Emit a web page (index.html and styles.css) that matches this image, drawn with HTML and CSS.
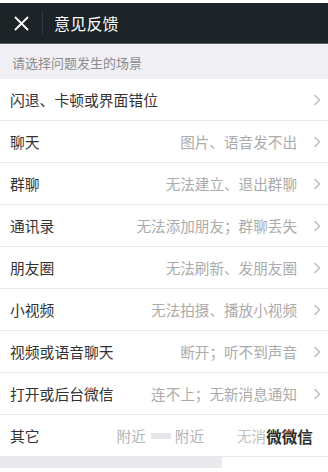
FILE: index.html
```html
<!DOCTYPE html>
<html lang="zh-CN">
<head>
<meta charset="utf-8">
<link rel="stylesheet" href="styles.css">
</head>
<body>
<div class="page">
  <header class="topbar">
    <span class="close">
      <svg width="15" height="15" viewBox="0 0 15 15"><path d="M1.5 1.5 L13.5 13.5 M13.5 1.5 L1.5 13.5" stroke="#ffffff" stroke-width="1.8" stroke-linecap="round"/></svg>
    </span>
    <span class="divider"></span>
    <span class="title">意见反馈</span>
  </header>
  <div class="section">请选择问题发生的场景</div>
  <ul class="list">
    <li class="row"><span class="label">闪退、卡顿或界面错位</span><span class="desc"></span><svg class="chev" width="8" height="12" viewBox="0 0 8 12"><path d="M1.5 1 L6.5 6 L1.5 11" fill="none" stroke="#bdbdbd" stroke-width="1.4"/></svg></li>
    <li class="row"><span class="label">聊天</span><span class="desc">图片、语音发不出</span><svg class="chev" width="8" height="12" viewBox="0 0 8 12"><path d="M1.5 1 L6.5 6 L1.5 11" fill="none" stroke="#bdbdbd" stroke-width="1.4"/></svg></li>
    <li class="row"><span class="label">群聊</span><span class="desc">无法建立、退出群聊</span><svg class="chev" width="8" height="12" viewBox="0 0 8 12"><path d="M1.5 1 L6.5 6 L1.5 11" fill="none" stroke="#bdbdbd" stroke-width="1.4"/></svg></li>
    <li class="row"><span class="label">通讯录</span><span class="desc">无法添加朋友；群聊丢失</span><svg class="chev" width="8" height="12" viewBox="0 0 8 12"><path d="M1.5 1 L6.5 6 L1.5 11" fill="none" stroke="#bdbdbd" stroke-width="1.4"/></svg></li>
    <li class="row"><span class="label">朋友圈</span><span class="desc">无法刷新、发朋友圈</span><svg class="chev" width="8" height="12" viewBox="0 0 8 12"><path d="M1.5 1 L6.5 6 L1.5 11" fill="none" stroke="#bdbdbd" stroke-width="1.4"/></svg></li>
    <li class="row"><span class="label">小视频</span><span class="desc">无法拍摄、播放小视频</span><svg class="chev" width="8" height="12" viewBox="0 0 8 12"><path d="M1.5 1 L6.5 6 L1.5 11" fill="none" stroke="#bdbdbd" stroke-width="1.4"/></svg></li>
    <li class="row"><span class="label">视频或语音聊天</span><span class="desc">断开；听不到声音</span><svg class="chev" width="8" height="12" viewBox="0 0 8 12"><path d="M1.5 1 L6.5 6 L1.5 11" fill="none" stroke="#bdbdbd" stroke-width="1.4"/></svg></li>
    <li class="row"><span class="label">打开或后台微信</span><span class="desc">连不上；无新消息通知</span><svg class="chev" width="8" height="12" viewBox="0 0 8 12"><path d="M1.5 1 L6.5 6 L1.5 11" fill="none" stroke="#bdbdbd" stroke-width="1.4"/></svg></li>
    <li class="row last"><span class="label">其它</span>
      <span class="glitch">
        <span class="g1">附近</span><span class="gblock"></span><span class="g2">附近</span><span class="g3">无消</span><span class="mark">微微信</span>
      </span>
    </li>
  </ul>
  <div class="footer"><span class="fbar"></span></div>
</div>
</body>
</html>
```
FILE: styles.css
```css
* { box-sizing: border-box; }
html, body { margin: 0; padding: 0; background: #ffffff; }
body {
  font-family: "Noto Sans CJK SC", "Noto Sans", sans-serif;
  width: 328px;
  height: 472px;
  overflow: hidden;
}
.page { padding-top: 3px; }
.topbar {
  height: 41px;
  background: #1d2427;
  border-bottom: 1px solid #5a5f62;
  display: flex;
  align-items: center;
}
.close {
  width: 42px;
  display: flex;
  justify-content: center;
  align-items: center;
  padding-left: 1px;
}
.close svg { display: block; }
.divider {
  width: 1px;
  height: 22px;
  background: #353b3e;
}
.title {
  color: #ffffff;
  font-size: 16px;
  margin-left: 11px;
  letter-spacing: 0.2px;
}
.section {
  height: 35px;
  background: #efeff4;
  color: #8c8c8c;
  font-size: 13px;
  padding-left: 12px;
  display: flex;
  align-items: center;
  padding-top: 2px;
}
.list { list-style: none; margin: 0; padding: 0; }
.row {
  height: 42px;
  border-bottom: 1px solid #e8e8e8;
  display: flex;
  align-items: center;
  padding-left: 10px;
  padding-right: 7px;
}
.label {
  color: #333333;
  font-size: 14.8px;
  white-space: nowrap;
}
.desc {
  flex: 1;
  text-align: right;
  color: #ababab;
  font-size: 14.6px;
  white-space: nowrap;
  margin-right: 16px;
}
.chev { display: block; flex: none; }
.glitch {
  flex: 1;
  display: flex;
  align-items: center;
  font-size: 14.6px;
  color: #b3b3b3;
  white-space: nowrap;
  padding-left: 77px;
}
.gblock {
  width: 20px;
  height: 6px;
  background: #e6e6ea;
  margin-left: 5px;
  margin-right: 4px;
}
.g3 { margin-left: 33px; color: #c0c0c0; }
.mark {
  color: #2e2e2e;
  font-size: 15.5px;
  font-weight: bold;
  margin-left: 0;
}
.footer {
  height: 11px;
  display: flex;
}
.fbar {
  width: 222px;
  height: 11px;
  background: #e9e9ee;
}
```
